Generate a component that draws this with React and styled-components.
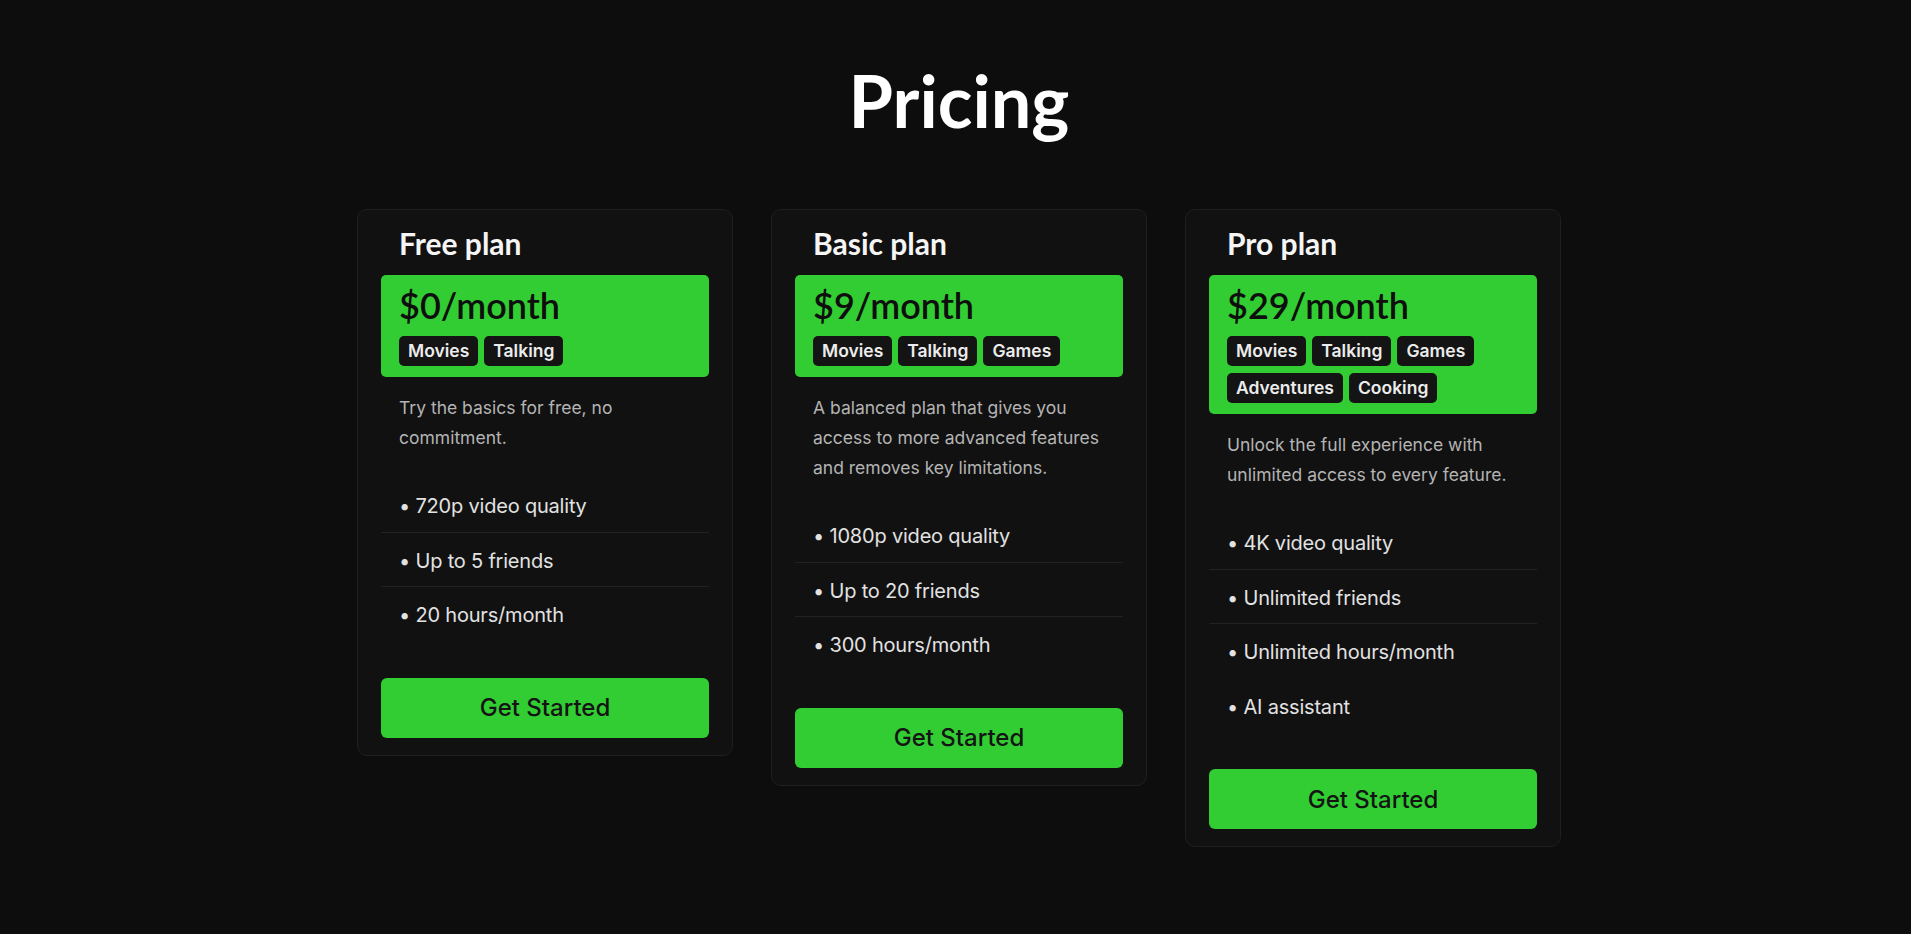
import React from "react";
import styled, { createGlobalStyle } from "styled-components";

const GlobalStyle = createGlobalStyle`
  html, body {
    margin: 0;
    padding: 0;
    background-color: #0d0d0d;
  }
  body {
    font-family: "Inter", "Liberation Sans", sans-serif;
    color: #ffffff;
  }
  * {
    box-sizing: border-box;
  }
`;

const Page = styled.div`
  min-height: 100vh;
  padding: 57px 0 60px 7px;
  display: flex;
  flex-direction: column;
  align-items: center;
`;

const Heading = styled.h1`
  margin: 0 0 66px;
  font-family: "Lato", "Liberation Sans", sans-serif;
  font-size: 72px;
  font-weight: 700;
  line-height: normal;
  color: #ffffff;
`;

const CardRow = styled.div`
  display: flex;
  align-items: flex-start;
  gap: 38px;
`;

const Card = styled.div`
  width: 376px;
  padding: 15px 23px 17px;
  background-color: #111111;
  border: 1px solid #1f1f1f;
  border-radius: 10px;
  display: flex;
  flex-direction: column;
`;

const PlanName = styled.h3`
  margin: 0 0 14px;
  padding: 0 18px;
  font-family: "Lato", "Liberation Sans", sans-serif;
  font-size: 30px;
  font-weight: 700;
  line-height: 36px;
  color: #f5f5f5;
`;

const PriceBox = styled.div`
  background-color: #32cd32;
  border-radius: 5px;
  padding: 9px 18px 11px;
`;

const Price = styled.div`
  font-family: "Lato", "Liberation Sans", sans-serif;
  font-size: 36px;
  font-weight: 600;
  line-height: 43px;
  color: #0e0e0e;
  margin-bottom: 9px;
`;

const Tags = styled.div`
  display: flex;
  flex-wrap: wrap;
  gap: 7px 6px;
`;

const Tag = styled.span`
  background-color: #141414;
  color: #ececec;
  border-radius: 5px;
  padding: 4px 9px;
  font-size: 17.5px;
  font-weight: 600;
  line-height: 22px;
`;

const Description = styled.p`
  margin: 16px 0 0;
  padding: 0 18px;
  font-size: 17.5px;
  line-height: 30px;
  color: #b4b4b4;
`;

const Features = styled.ul`
  list-style: none;
  margin: 25px 0 0;
  padding: 0;
`;

const Feature = styled.li`
  padding: 14px 18px 11.5px;
  font-size: 20px;
  letter-spacing: -0.2px;
  line-height: 28px;
  color: #e2e2e2;
  border-bottom: 1px solid ${(props) => (props.$divided ? "#222222" : "transparent")};
`;

const StartButton = styled.button`
  margin-top: 36px;
  width: 100%;
  height: 60px;
  border: none;
  border-radius: 6px;
  background-color: #32cd32;
  color: #141414;
  font-family: "Inter", "Liberation Sans", sans-serif;
  font-size: 24px;
  font-weight: 500;
  cursor: pointer;
`;

const plans = [
  {
    name: "Free plan",
    price: "$0/month",
    tags: ["Movies", "Talking"],
    description: "Try the basics for free, no commitment.",
    features: ["720p video quality", "Up to 5 friends", "20 hours/month"],
  },
  {
    name: "Basic plan",
    price: "$9/month",
    tags: ["Movies", "Talking", "Games"],
    description:
      "A balanced plan that gives you access to more advanced features and removes key limitations.",
    features: ["1080p video quality", "Up to 20 friends", "300 hours/month"],
  },
  {
    name: "Pro plan",
    price: "$29/month",
    tags: ["Movies", "Talking", "Games", "Adventures", "Cooking"],
    description:
      "Unlock the full experience with unlimited access to every feature.",
    features: [
      "4K video quality",
      "Unlimited friends",
      "Unlimited hours/month",
      "AI assistant",
    ],
  },
];

const App = () => {
  return (
    <>
      <GlobalStyle />
      <Page>
        <Heading>Pricing</Heading>
        <CardRow>
          {plans.map((plan) => (
            <Card key={plan.name}>
              <PlanName>{plan.name}</PlanName>
              <PriceBox>
                <Price>{plan.price}</Price>
                <Tags>
                  {plan.tags.map((tag) => (
                    <Tag key={tag}>{tag}</Tag>
                  ))}
                </Tags>
              </PriceBox>
              <Description>{plan.description}</Description>
              <Features>
                {plan.features.map((feature, i) => (
                  <Feature key={feature} $divided={i < 2}>
                    • {feature}
                  </Feature>
                ))}
              </Features>
              <StartButton>Get Started</StartButton>
            </Card>
          ))}
        </CardRow>
      </Page>
    </>
  );
};

export default App;
